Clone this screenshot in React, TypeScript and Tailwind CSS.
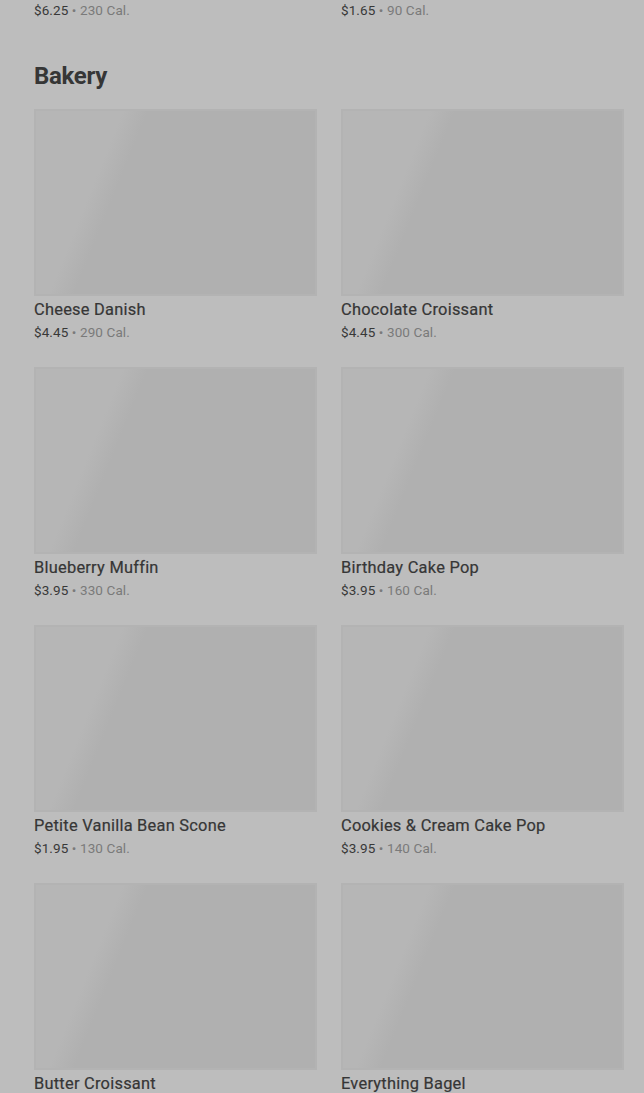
const top = [
  { name: "Iced Caffè Mocha", price: "$6.25", cal: "230 Cal." },
  { name: "Caffè Americano", price: "$1.65", cal: "90 Cal." },
];

const bakery = [
  { name: "Cheese Danish", price: "$4.45", cal: "290 Cal." },
  { name: "Chocolate Croissant", price: "$4.45", cal: "300 Cal." },
  { name: "Blueberry Muffin", price: "$3.95", cal: "330 Cal." },
  { name: "Birthday Cake Pop", price: "$3.95", cal: "160 Cal." },
  { name: "Petite Vanilla Bean Scone", price: "$1.95", cal: "130 Cal." },
  { name: "Cookies & Cream Cake Pop", price: "$3.95", cal: "140 Cal." },
  { name: "Butter Croissant", price: "$3.75", cal: "260 Cal." },
  { name: "Everything Bagel", price: "$2.45", cal: "290 Cal." },
];

function Info({ name, price, cal }: { name: string; price: string; cal: string }) {
  return (
    <div>
      <div className="text-[16.4px] leading-[22px] text-[#363636] tracking-[0.25px] [-webkit-text-stroke:0.2px_#363636]">{name}</div>
      <div className="text-[13.5px] leading-[23px] text-[#383838] tracking-[0.1px]">
        {price}
        <span className="text-[#7a7a7a]"> • {cal}</span>
      </div>
    </div>
  );
}

export default function App() {
  return (
    <div className="h-[1093px] overflow-hidden bg-[#bdbdbd] pl-[34px] pr-[20px] font-['Roboto',sans-serif]">
      <div className="grid grid-cols-2 gap-x-[24px] -mt-[23px]">
        {top.map((p) => (
          <Info key={p.name} {...p} />
        ))}
      </div>
      <h2 className="mt-[39px] text-[24px] leading-[30px] font-bold text-[#363636] tracking-[-0.3px]">Bakery</h2>
      <div className="mt-[18px] grid grid-cols-2 gap-x-[24px] gap-y-[23px]">
        {bakery.map((p) => (
          <div key={p.name}>
            <div className="h-[187px] bg-[#b0b0b0] bg-[linear-gradient(112deg,#b6b6b6_0%,#b6b6b6_25%,#b0b0b0_32%,#b0b0b0_100%)] shadow-[inset_0_0_0_2px_#b3b3b3]" />
            <div className="mt-[3px]">
              <Info {...p} />
            </div>
          </div>
        ))}
      </div>
    </div>
  );
}
